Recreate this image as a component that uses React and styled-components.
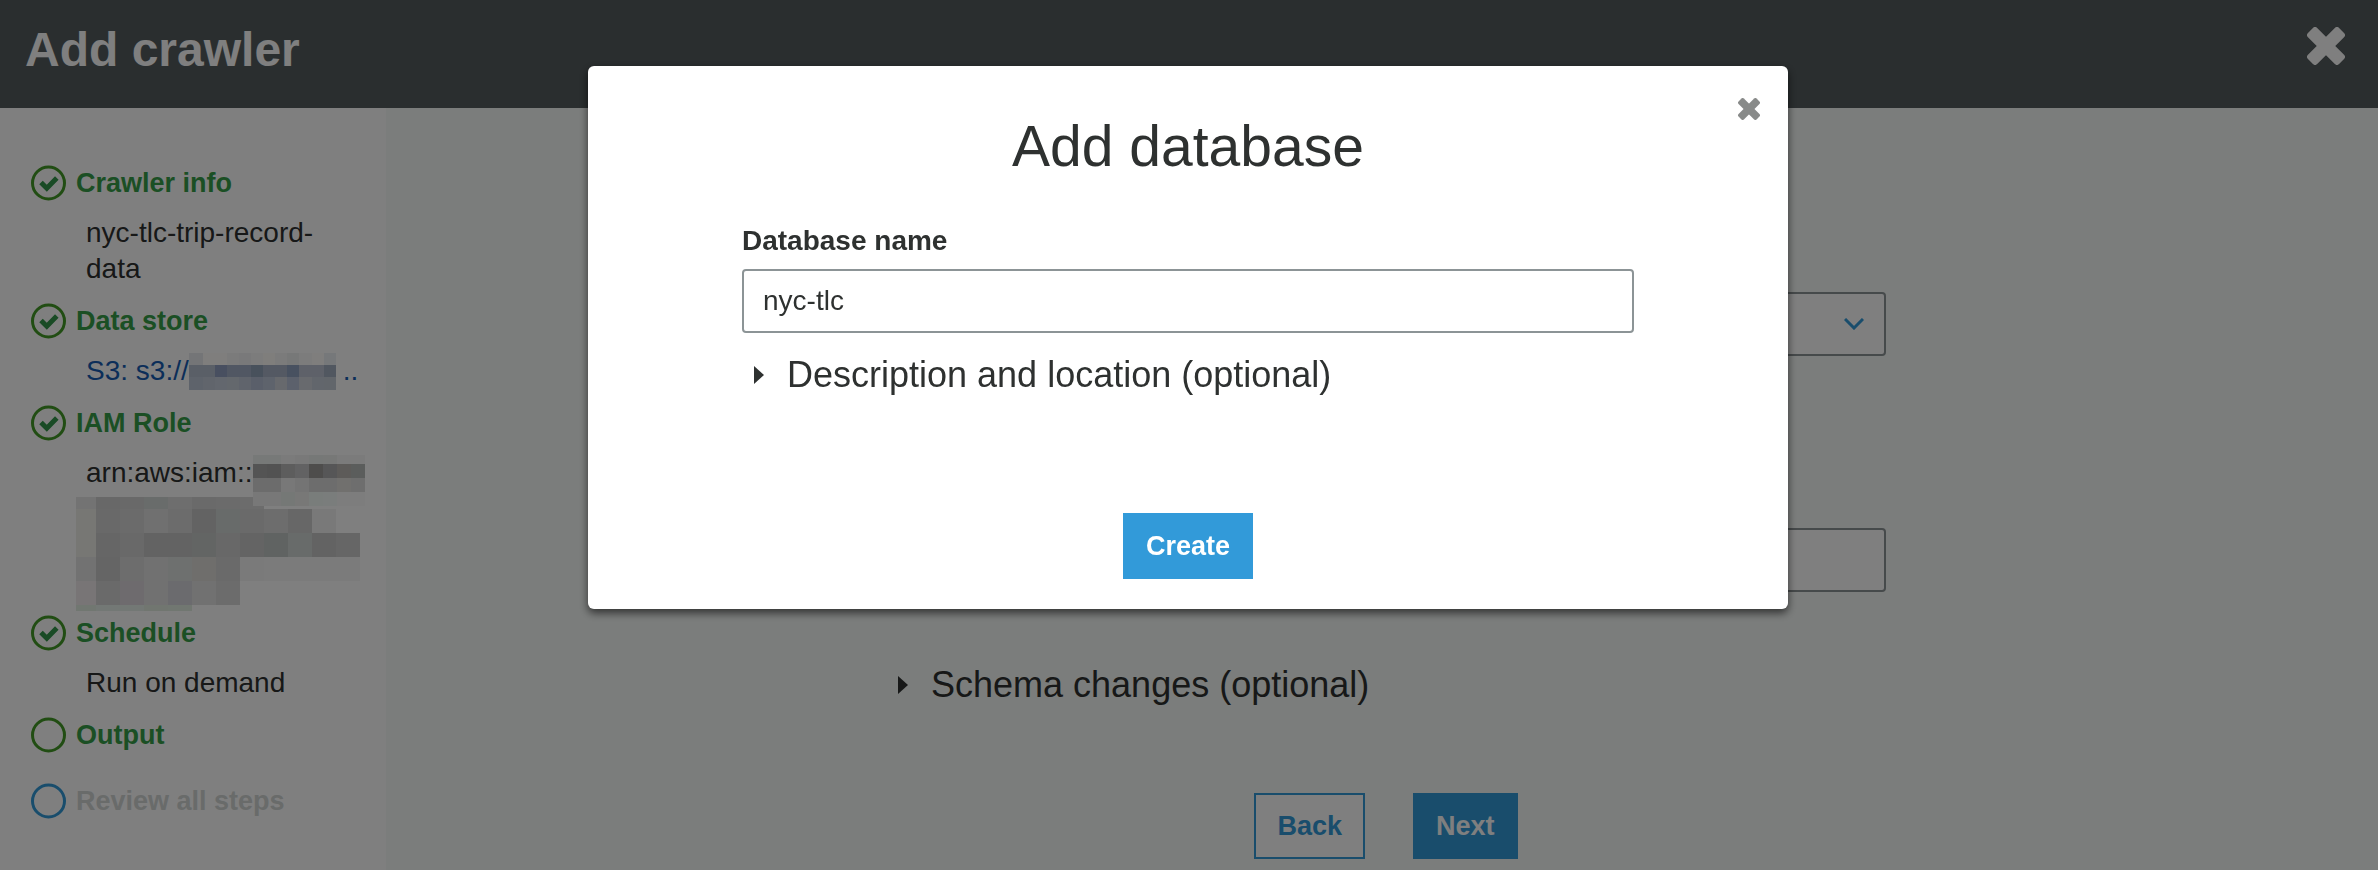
import React from "react";
import styled, { createGlobalStyle } from "styled-components";

const Global = createGlobalStyle`
  *, *::before, *::after { box-sizing: border-box; }
  body {
    margin: 0;
    background: #f6faf8;
    color: #2e3130;
    font-family: "Liberation Sans", Arial, sans-serif;
    font-size: 28px;
    line-height: 36px;
  }
`;

const Page = styled.div`
  min-height: 100vh;
  display: flex;
  flex-direction: column;
`;

const Header = styled.header`
  display: flex;
  align-items: flex-start;
  justify-content: space-between;
  height: 108px;
  padding: 22px 33px 0 25px;
  background: #545c5e;
  color: #fff;
`;

const PageTitle = styled.h1`
  margin: 0;
  font-size: 48px;
  line-height: 56px;
`;

const IconButton = styled.button`
  display: block;
  padding: ${(p) => (p.$large ? "5px 0 0" : "0")};
  border: 0;
  background: none;
  color: ${(p) => p.$color};
  cursor: pointer;
  svg { display: block; }
`;

const Body = styled.div`
  flex: 1;
  display: flex;
`;

const Sidebar = styled.nav`
  width: 386px;
  flex: none;
  padding: 57px 20px 40px 31px;
  background: #fff;
`;

const Steps = styled.ol`
  margin: 0;
  padding: 0;
  list-style: none;
`;

const Step = styled.li`
  margin-bottom: ${(p) => (p.$last ? 30 : 14)}px;
`;

const StepLabel = styled.div`
  display: flex;
  align-items: center;
  gap: 9px;
  height: 36px;
  font-size: 27px;
  font-weight: bold;
  color: ${(p) => (p.$pending ? "#d2d6d5" : "#369f49")};
  svg { flex: none; }
`;

const Detail = styled.div`
  padding: 14px 0 2px 55px;
`;

const DetailLine = styled.div`
  display: flex;
  white-space: nowrap;
`;

const StoreLink = styled.a`
  color: #175db2;
  text-decoration: none;
`;

const Main = styled.main`
  flex: 1;
  min-width: 0;
  padding: 184px 40px 11px 48px;
  background: #f6faf8;
`;

const Form = styled.form`
  max-width: 1000px;
  margin: 0 auto;
`;

const SelectBox = styled.div`
  display: grid;
  align-items: center;
  margin-bottom: 172px;
  > * { grid-area: 1 / 1; }
  svg { justify-self: end; margin-right: 22px; pointer-events: none; }
`;

const field = `
  display: block;
  width: 100%;
  height: 64px;
  padding: 0 19px;
  border: 2px solid #8c9496;
  border-radius: 4px;
  background: #fff;
  color: #2e3130;
  font: inherit;
`;
const Select = styled.select`${field} appearance: none;`;
const TextInput = styled.input`${field}`;

const Disclosure = styled.button`
  display: flex;
  align-items: center;
  gap: 23px;
  margin-top: ${(p) => p.$gap}px;
  padding: 0 0 0 12px;
  border: 0;
  background: none;
  color: #2e3130;
  font: inherit;
  font-size: 36px;
  line-height: 44px;
  text-align: left;
`;

const Actions = styled.div`
  display: flex;
  justify-content: center;
  gap: 48px;
  margin-top: ${(p) => p.$gap}px;
`;

const Button = styled.button`
  height: 66px;
  padding: 0 21px;
  border: 2px solid #329ad9;
  background: ${(p) => (p.$primary ? "#329ad9" : "#fff")};
  color: ${(p) => (p.$primary ? "#fff" : "#329ad9")};
  font: inherit;
  font-size: 27px;
  font-weight: bold;
`;

const Overlay = styled.div`
  position: fixed;
  inset: 0;
  z-index: 10;
  display: flex;
  align-items: flex-start;
  justify-content: center;
  padding: 66px 26px 24px 24px;
  background: rgba(0, 0, 0, 0.5);
`;

const Dialog = styled.section`
  width: 100%;
  max-width: 1200px;
  padding: 32px 28px 30px;
  border-radius: 6px;
  background: #fff;
  box-shadow: 0 4px 8px rgba(0, 0, 0, 0.6);
`;

const DialogClose = styled.div`
  display: flex;
  justify-content: flex-end;
`;

const DialogTitle = styled.h2`
  margin: -6px 0 45px;
  font-size: 57px;
  font-weight: normal;
  line-height: 64px;
  text-align: center;
`;

const DialogForm = styled.form`
  padding: 0 126px;
`;

const Label = styled.label`
  display: block;
  margin-bottom: 10px;
  font-weight: bold;
`;

const Cross = ({ size }) => (
  <svg width={size} height={size} viewBox="-19 -19 38 38" fill="currentColor" aria-hidden="true">
    <rect x="-22" y="-6.500" width="44" height="13" rx="3" transform="rotate(45)" />
    <rect x="-22" y="-6.500" width="44" height="13" rx="3" transform="rotate(-45)" />
  </svg>
);

const StepIcon = ({ done, color = "#439a26" }) => (
  <svg width="36" height="36" viewBox="0 0 36 36" fill="none" aria-hidden="true">
    <circle cx="17.500" cy="18" r="16" stroke={color} strokeWidth="3" />
    {done && (
      <path
        d="M10 17.500 15.800 23.200 25.800 13"
        stroke="#33964a"
        strokeWidth="5"
      />
    )}
  </svg>
);

const Triangle = () => (
  <svg width="10" height="18" viewBox="0 0 10 18" aria-hidden="true">
    <path d="M0 0 10 9 0 18Z" fill="currentColor" />
  </svg>
);

const Mosaic = styled.svg`
  display: block;
  flex: none;
  margin: ${(p) => p.$m};
  position: relative;
  z-index: ${(p) => (p.$above ? 1 : 0)};
`;

const Redacted = ({ xs, ys, rows, margin, above }) => (
  <Mosaic
    width={xs[xs.length - 1]}
    height={ys[ys.length - 1]}
    shapeRendering="crispEdges"
    $m={margin}
    $above={above}
    aria-hidden="true"
  >
    {rows.map((row, r) =>
      row.split(" ").map((c, i) => (
        <rect
          key={`${r}-${i}`}
          x={xs[i]}
          y={ys[r]}
          width={xs[i + 1] - xs[i]}
          height={ys[r + 1] - ys[r]}
          fill={`#${c}`}
        />
      ))
    )}
  </Mosaic>
);

const STORE = {
  xs: [0, 14, 26, 38, 50, 62, 74, 86, 98, 110, 123, 135, 147],
  ys: [0, 12, 24, 37],
  rows: [
    "e8eaee fffcfa fefcfa f6f6f6 f2f2f4 f8f8f8 fffcf8 f6f6f6 eef0f0 f8f8f8 fffcfa ecf0f4",
    "b4bece b4bece 909fc0 a2aec6 a2aec6 90a2b8 a8b2c6 a8b2c6 90a2c0 bcc2d2 bcc2d2 a2aec0",
    "bcc6d6 c2cad8 c6cedc c8d0da c0c8d8 b4bed4 bcc6d8 ced2da b8c2d8 d0d4dc c4ccd8 c4ccd6",
  ],
};

const ROLE_TAIL = {
  xs: [0, 14, 28, 42, 56, 70, 84, 98, 112],
  ys: [0, 9, 23, 37, 51],
  rows: [
    "eef2f0 eef2f0 f6f6f6 f2f2f2 ecf0ee eef0ee f6f6f6 f6f6f6",
    "a8a8a8 a4a4a4 bababa c4c4c6 9c9a98 acacae bab6b2 b6bab8",
    "d8d8d8 d8d8d8 f0f0f0 e8e8e8 dadada dadada e2e0dc dcdcdc",
    "f0f0f0 f0f0f0 eaf0ec f0f0ee f2faf6 f4faf8 fafafa fafafa",
  ],
};

const ROLE_REST = {
  xs: [0, 20, 44, 68, 92, 116, 140, 164, 188, 212, 236, 260, 284],
  ys: [0, 12, 36, 60, 84, 108, 114],
  rows: [
    "e6e6e6 d0d0d0 d2d2d2 d2d8d6 dcdcdc d4d4d4 d6d6d6 d8d8d8",
    "eeeee8 d2d2d2 d6d6d6 e0e0e0 d8d8d8 c6c6c6 d0d6d4 d4d4d4 dadada cecece f2f2f2 ffffff",
    "eeeee8 cccccc d2d2d2 c6c6c6 c6c6c6 c6cac8 d0d0d0 c8c8c8 c0c6c4 d0d6d4 c6c6c6 cccccc",
    "e4e4e4 cacaca dadada e2e2e2 dce0de dedcd8 d4d4d4 f4f4f4 f6f6f6 f6f6f6 f6f6f6 f6f6f6",
    "f0eaec d4d4d4 dcd6dc e2e2e2 d6d6dc e2e2e2 d8d8d8 ffffff ffffff ffffff ffffff ffffff",
    "e2eee2 e6f0ea e6f0ea e2ece0 e2eee2 ffffff ffffff ffffff ffffff ffffff ffffff ffffff",
  ],
};

export default function App() {
  return (
    <>
      <Global />
      <Page>
        <Header>
          <PageTitle>Add crawler</PageTitle>
          <IconButton $large $color="#fff" aria-label="Close wizard">
            <Cross size={38} />
          </IconButton>
        </Header>
        <Body>
          <Sidebar aria-label="Steps">
            <Steps>
              <Step>
                <StepLabel><StepIcon done />Crawler info</StepLabel>
                <Detail>nyc-tlc-trip-record-data</Detail>
              </Step>
              <Step>
                <StepLabel><StepIcon done />Data store</StepLabel>
                <Detail>
                  <StoreLink href="#store">
                    <DetailLine>
                      S3: s3://
                      <Redacted {...STORE} margin="0 7px -1px 0" />
                      ..
                    </DetailLine>
                  </StoreLink>
                </Detail>
              </Step>
              <Step>
                <StepLabel><StepIcon done />IAM Role</StepLabel>
                <Detail>
                  <DetailLine>
                    arn:aws:iam::
                    <Redacted {...ROLE_TAIL} above margin="0 -20px -15px 0" />
                  </DetailLine>
                  <Redacted {...ROLE_REST} margin="6px -20px -12px -10px" />
                </Detail>
              </Step>
              <Step>
                <StepLabel><StepIcon done />Schedule</StepLabel>
                <Detail>Run on demand</Detail>
              </Step>
              <Step $last>
                <StepLabel><StepIcon />Output</StepLabel>
              </Step>
              <Step>
                <StepLabel $pending><StepIcon color="#329ad9" />Review all steps</StepLabel>
              </Step>
            </Steps>
          </Sidebar>
          <Main>
            <Form>
              <SelectBox>
                <Select aria-label="Database" />
                <svg width="20" height="12" viewBox="0 0 20 12" fill="none" aria-hidden="true">
                  <path d="M1 1 10 10 19 1" stroke="#329ad9" strokeWidth="3" />
                </svg>
              </SelectBox>
              <TextInput aria-label="Table prefix" />
              <Disclosure type="button" $gap={71}>
                <Triangle />
                Schema changes (optional)
              </Disclosure>
              <Actions $gap={86}>
                <Button type="button">Back</Button>
                <Button type="button" $primary>Next</Button>
              </Actions>
            </Form>
          </Main>
        </Body>
      </Page>
      <Overlay>
        <Dialog role="dialog" aria-modal="true" aria-labelledby="dialog-title">
          <DialogClose>
            <IconButton $color="#888a89" aria-label="Close dialog">
              <Cross size={22} />
            </IconButton>
          </DialogClose>
          <DialogTitle id="dialog-title">Add database</DialogTitle>
          <DialogForm>
            <Label htmlFor="database-name">Database name</Label>
            <TextInput id="database-name" defaultValue="nyc-tlc" />
            <Disclosure type="button" $gap={20}>
              <Triangle />
              Description and location (optional)
            </Disclosure>
            <Actions $gap={116}>
              <Button type="button" $primary>Create</Button>
            </Actions>
          </DialogForm>
        </Dialog>
      </Overlay>
    </>
  );
}
